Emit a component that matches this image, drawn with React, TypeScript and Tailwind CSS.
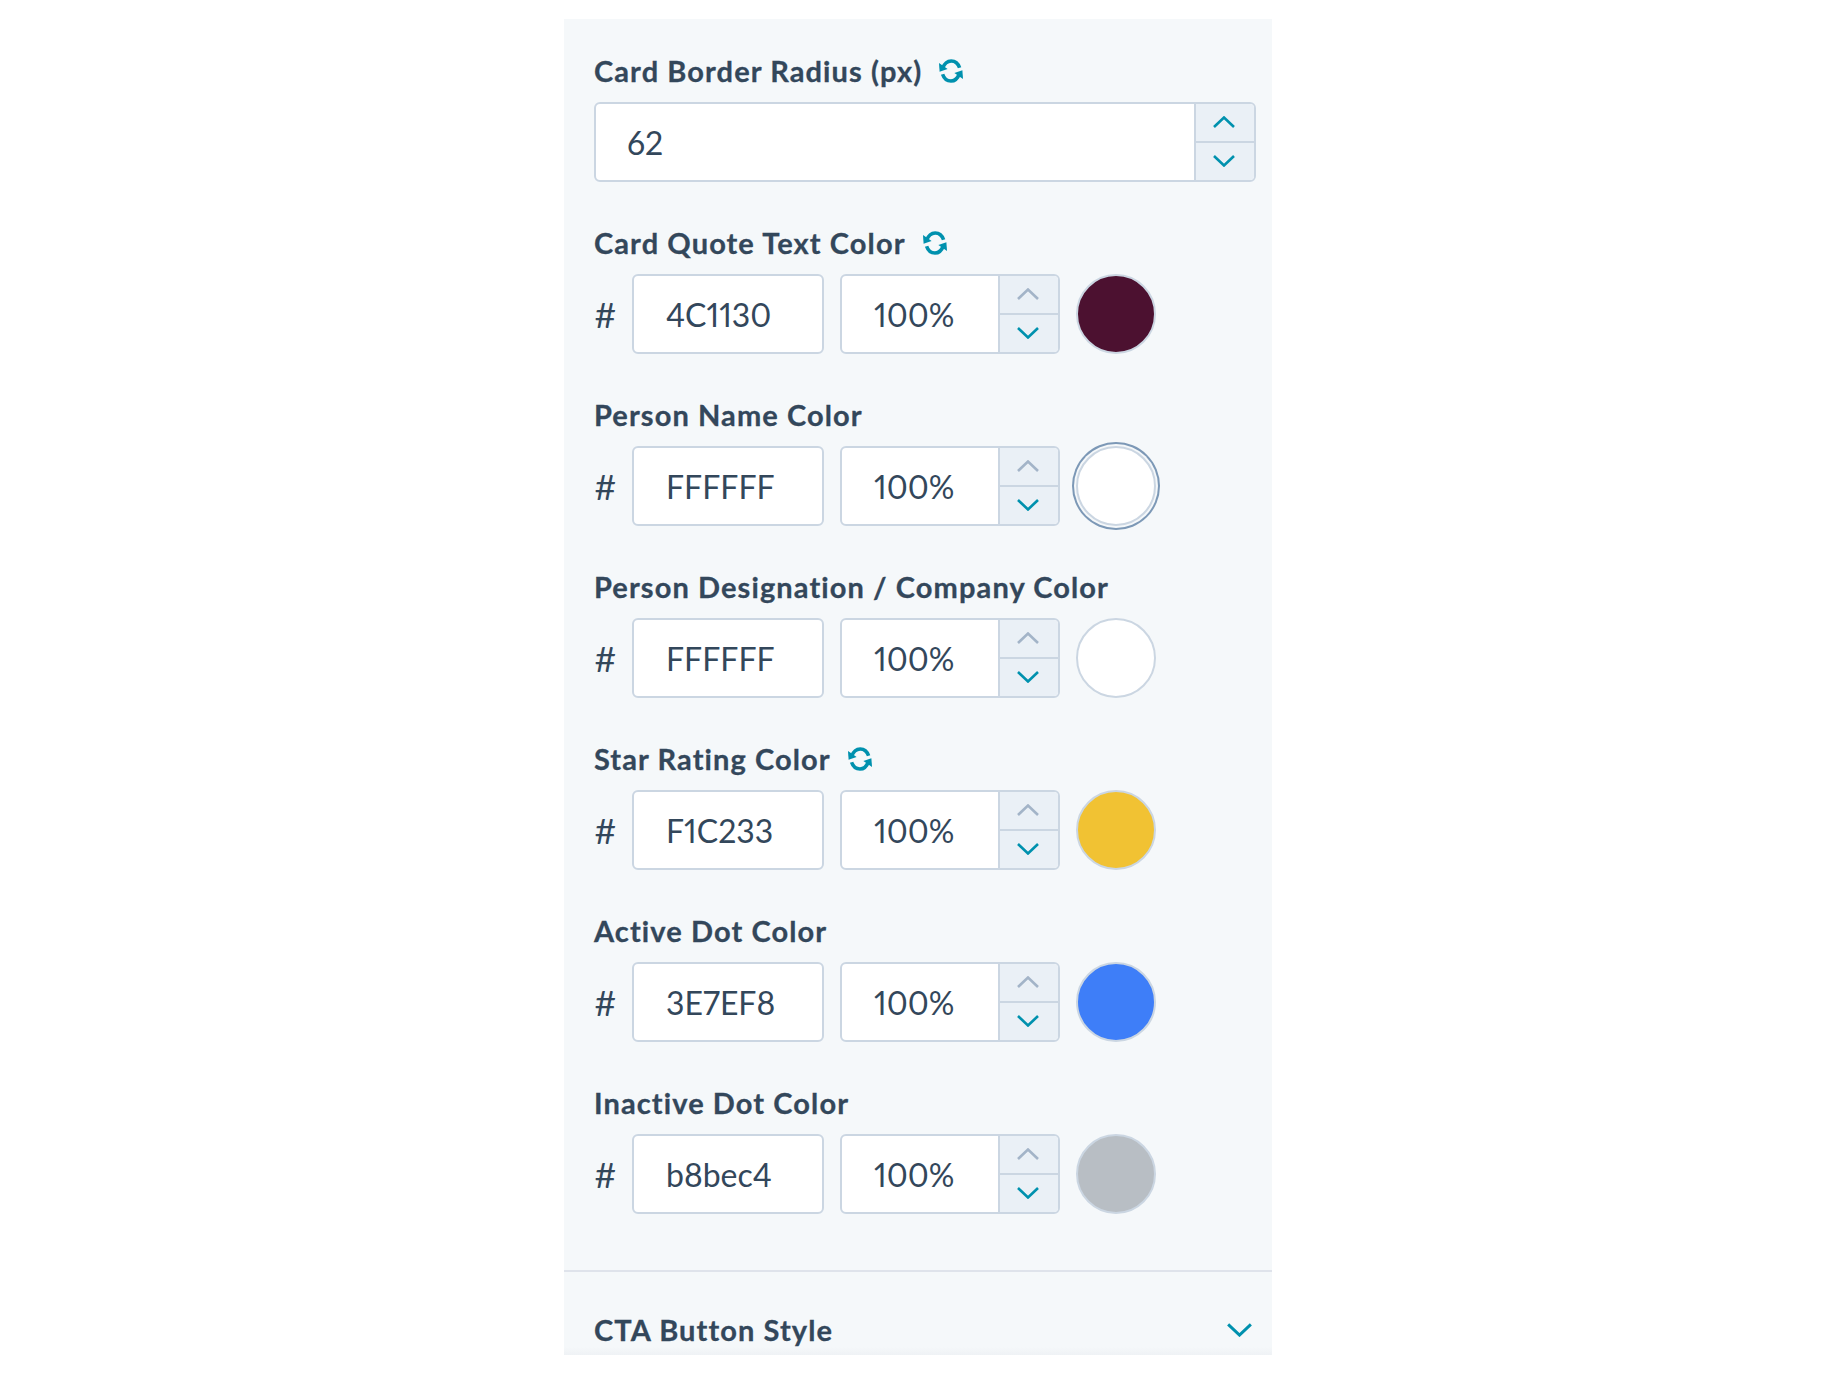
const colorRows = [
  { label: 'Card Quote Text Color', hex: '4C1130', color: 'bg-[#4c1130]', reset: true, focused: false },
  { label: 'Person Name Color', hex: 'FFFFFF', color: 'bg-white', reset: false, focused: true },
  { label: 'Person Designation / Company Color', hex: 'FFFFFF', color: 'bg-white', reset: false, focused: false },
  { label: 'Star Rating Color', hex: 'F1C233', color: 'bg-[#f1c233]', reset: true, focused: false },
  { label: 'Active Dot Color', hex: '3E7EF8', color: 'bg-[#3e7ef8]', reset: false, focused: false },
  { label: 'Inactive Dot Color', hex: 'b8bec4', color: 'bg-[#b8bec4]', reset: false, focused: false },
];

function ResetIcon() {
  return (
    <svg width="26" height="26" viewBox="0 0 26 26" fill="none" className="ml-4 shrink-0">
      <path d="M4.5 10.5C6 6.5 9.2 3 13.2 3c3.9 0 7 2.6 8.4 6.8" stroke="#0091ae" strokeWidth="3.6" />
      <path d="M21.5 15.5C20 19.5 16.8 23 13 23c-3.9 0-7-2.6-8.4-6.8" stroke="#0091ae" strokeWidth="3.6" />
      <path d="M1 5l0.6 8.8 8-2.8z" fill="#0091ae" />
      <path d="M25 21l-0.6-8.8-8 2.8z" fill="#0091ae" />
    </svg>
  );
}

function Chevron({ up, muted, large }: { up?: boolean; muted?: boolean; large?: boolean }) {
  return (
    <svg width={large ? 25 : 22} height={large ? 14 : 12} viewBox="0 0 22 12" fill="none">
      <path
        d={up ? 'M1 11L11 1.5 21 11' : 'M1 1l10 9.5L21 1'}
        stroke={muted ? '#a3b4c8' : '#0091ae'}
        strokeWidth="2.6"
      />
    </svg>
  );
}

function Stepper({ muted }: { muted?: boolean }) {
  return (
    <div className="flex w-[60px] shrink-0 flex-col border-l-2 border-[#cbd6e2] bg-[#eaf0f6]">
      <button className="flex flex-1 items-center justify-center border-b-2 border-[#cbd6e2] pb-px pr-0.5">
        <Chevron up muted={muted} />
      </button>
      <button className="flex flex-1 items-center justify-center pb-px pr-0.5">
        <Chevron />
      </button>
    </div>
  );
}

function Label({ text, reset }: { text: string; reset?: boolean }) {
  return (
    <div className="mb-4 flex h-[30px] items-center text-[29px] font-bold tracking-[1.1px] text-[#33475b] [-webkit-text-stroke:0.3px_#33475b]">
      {text}
      {reset && <ResetIcon />}
    </div>
  );
}

export default function App() {
  return (
    <div className="min-h-[1377px] bg-white pt-[19px] font-['Lato',sans-serif] text-[#33475b] proportional-nums">
      <div className="relative mx-auto h-[1336px] w-[708px] overflow-hidden bg-[#f5f8fa] pt-[37px]">
        <div className="flex flex-col gap-[46px] pl-[30px] pr-4">
          <div>
            <Label text="Card Border Radius (px)" reset />
            <div className="flex h-20 overflow-hidden rounded-md border-2 border-[#cbd6e2] bg-white">
              <div className="flex flex-1 items-center pl-[31px] pt-px text-[32px]">62</div>
              <Stepper />
            </div>
          </div>

          {colorRows.map((row) => (
            <div key={row.label}>
              <Label text={row.label} reset={row.reset} />
              <div className="flex h-20 items-center">
                <span className="w-[38px] pt-px text-[35px] leading-none">#</span>
                <div className="flex h-20 w-[192px] items-center rounded-md border-2 border-[#cbd6e2] bg-white pl-[32px] pt-px text-[32px]">
                  {row.hex}
                </div>
                <div className="ml-4 flex h-20 w-[220px] overflow-hidden rounded-md border-2 border-[#cbd6e2] bg-white">
                  <div className="flex flex-1 items-center pl-[32px] pt-px text-[32px]">100%</div>
                  <Stepper muted />
                </div>
                <div
                  className={`ml-4 h-20 w-20 rounded-full border-2 border-[#cbd6e2] ${row.color} ${
                    row.focused ? 'shadow-[0_0_0_2px_#f5f8fa,0_0_0_4px_#7c98b6]' : ''
                  }`}
                />
              </div>
            </div>
          ))}
        </div>

        <div className="mt-[56px] h-0.5 bg-[#dfe3eb]" />

        <div className="flex items-center justify-between pl-[30px] pr-5 pt-[36px]">
          <div className="text-[29px] font-bold tracking-[1.1px] [-webkit-text-stroke:0.3px_#33475b]">CTA Button Style</div>
          <Chevron large />
        </div>

        <div className="absolute inset-x-0 bottom-0 h-2 bg-gradient-to-b from-transparent to-[#eff2f5]" />
      </div>
    </div>
  );
}
